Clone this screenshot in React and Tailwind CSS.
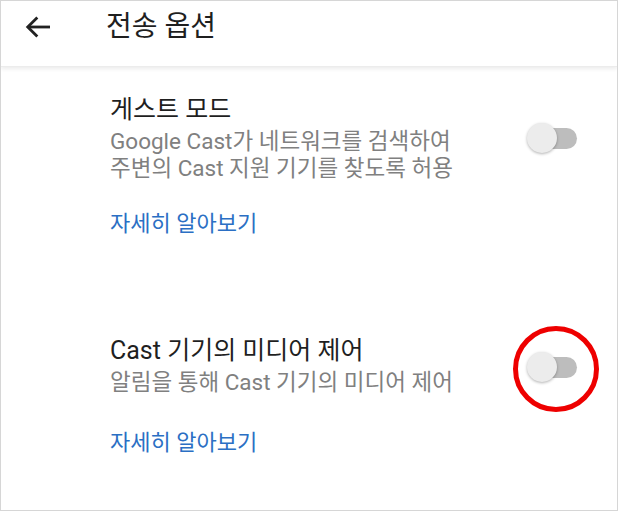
import React from 'react';

const Toggle = () => (
    <div className="relative w-[50px] h-[30px] shrink-0">
        <div className="absolute left-[9px] top-[5px] w-[41px] h-[21px] rounded-full bg-[#bdbdbd]" />
        <div className="absolute left-0 top-0 w-[30px] h-[30px] rounded-full bg-[#ececec] shadow-[0_1px_3px_rgba(0,0,0,0.3)]" />
    </div>
);

const Section = ({ title, lines, circled, linkGap, toggleTop }) => (
    <div className="flex items-start">
        <div className="flex-1">
            <div className="text-[25px] leading-[30px] text-[#1f1f1f]">{title}</div>
            <div className="mt-[3px] text-[22.5px] leading-[27px] text-[#808080]">
                {lines.map((l) => (
                    <div key={l}>{l}</div>
                ))}
            </div>
            <div className={`${linkGap} text-[22px] leading-[28px] text-[#2b6fc4]`}>자세히 알아보기</div>
        </div>
        <div className={`relative mr-[40px] ${toggleTop}`}>
            <Toggle />
            {circled && (
                <div className="absolute left-[-14px] top-[-26px] w-[86px] h-[86px] rounded-full border-[5px] border-[#ee0000]" />
            )}
        </div>
    </div>
);

export default function App() {
    return (
        <div
            className="w-[618px] h-[511px] bg-white border border-[#d6d6d6] overflow-hidden"
            style={{ fontFamily: 'Roboto, "Noto Sans CJK KR", sans-serif' }}
        >
            <div className="h-[66px] pb-[14px] flex items-center shadow-[0_2px_4px_rgba(0,0,0,0.08)] border-b border-[#ececec]">
                <svg className="ml-[21px]" width="32" height="32" viewBox="0 0 24 24" fill="none" stroke="#222" strokeWidth="2.1">
                    <path d="M21 12H4.5" />
                    <path d="M11.5 4.8l-7.2 7.2 7.2 7.2" />
                </svg>
                <div className="ml-[52px] text-[28px] text-[#1f1f1f]">전송 옵션</div>
            </div>
            <div className="pl-[109px] pt-[28px]">
                <Section
                    title="게스트 모드"
                    lines={['Google Cast가 네트워크를 검색하여', '주변의 Cast 지원 기기를 찾도록 허용']}
                    linkGap="mt-[28px]"
                    toggleTop="mt-[28px]"
                />
                <div className="h-[98px]" />
                <Section
                    title="Cast 기기의 미디어 제어"
                    lines={['알림을 통해 Cast 기기의 미디어 제어']}
                    linkGap="mt-[33px]"
                    toggleTop="mt-[16px]"
                    circled
                />
            </div>
        </div>
    );
}
